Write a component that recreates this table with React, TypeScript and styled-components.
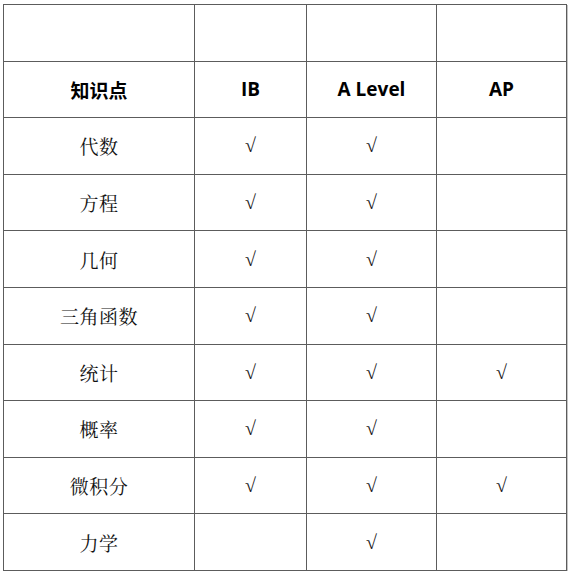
import React from "react";
import styled, { createGlobalStyle } from "styled-components";

const GlobalStyle = createGlobalStyle`
  html, body {
    margin: 0;
    padding: 0;
    background: #ffffff;
  }
`;

interface Row {
  topic: string;
  ib: boolean;
  alevel: boolean;
  ap: boolean;
}

const rows: Row[] = [
  { topic: "代数", ib: true, alevel: true, ap: false },
  { topic: "方程", ib: true, alevel: true, ap: false },
  { topic: "几何", ib: true, alevel: true, ap: false },
  { topic: "三角函数", ib: true, alevel: true, ap: false },
  { topic: "统计", ib: true, alevel: true, ap: true },
  { topic: "概率", ib: true, alevel: true, ap: false },
  { topic: "微积分", ib: true, alevel: true, ap: true },
  { topic: "力学", ib: false, alevel: true, ap: false },
];

const Page = styled.div`
  padding: 4px 0 0 3px;
`;

const Table = styled.table`
  border-collapse: collapse;
  table-layout: fixed;
  box-shadow: 1px 1px 0 #c4c4c4;
`;

const Tr = styled.tr`
  height: 56.6px;
`;

const Cell = styled.td<{ $w?: number }>`
  border: 1px solid #5c5c5c;
  padding: 0;
  text-align: center;
  vertical-align: middle;
  width: ${({ $w }) => ($w ? `${$w}px` : "auto")};
`;

const HeadText = styled.span`
  font-family: "Open Sans", "Noto Sans CJK SC", sans-serif;
  font-weight: 700;
  font-size: 19px;
  color: #000;
`;

const CjkHead = styled.span`
  font-family: "Noto Sans CJK SC", sans-serif;
  font-weight: 700;
  font-size: 19px;
  color: #000;
`;

const Topic = styled.span`
  font-family: "Noto Serif CJK SC", "Noto Sans CJK SC", serif;
  font-weight: 400;
  font-size: 19px;
  color: #111;
  letter-spacing: 0.5px;
`;

const Tick = styled.span`
  font-family: "Liberation Serif", "DejaVu Serif", serif;
  font-size: 20px;
  color: #1a1a1a;
`;

const Check = ({ on }: { on: boolean }) => (on ? <Tick>√</Tick> : null);

export default function App() {
  return (
    <Page>
      <GlobalStyle />
      <Table>
        <tbody>
          <Tr>
            <Cell $w={190} />
            <Cell $w={111} />
            <Cell $w={129} />
            <Cell $w={129} />
          </Tr>
          <Tr>
            <Cell>
              <CjkHead>知识点</CjkHead>
            </Cell>
            <Cell>
              <HeadText>IB</HeadText>
            </Cell>
            <Cell>
              <HeadText>A Level</HeadText>
            </Cell>
            <Cell>
              <HeadText>AP</HeadText>
            </Cell>
          </Tr>
          {rows.map((r) => (
            <Tr key={r.topic}>
              <Cell>
                <Topic>{r.topic}</Topic>
              </Cell>
              <Cell>
                <Check on={r.ib} />
              </Cell>
              <Cell>
                <Check on={r.alevel} />
              </Cell>
              <Cell>
                <Check on={r.ap} />
              </Cell>
            </Tr>
          ))}
        </tbody>
      </Table>
    </Page>
  );
}
